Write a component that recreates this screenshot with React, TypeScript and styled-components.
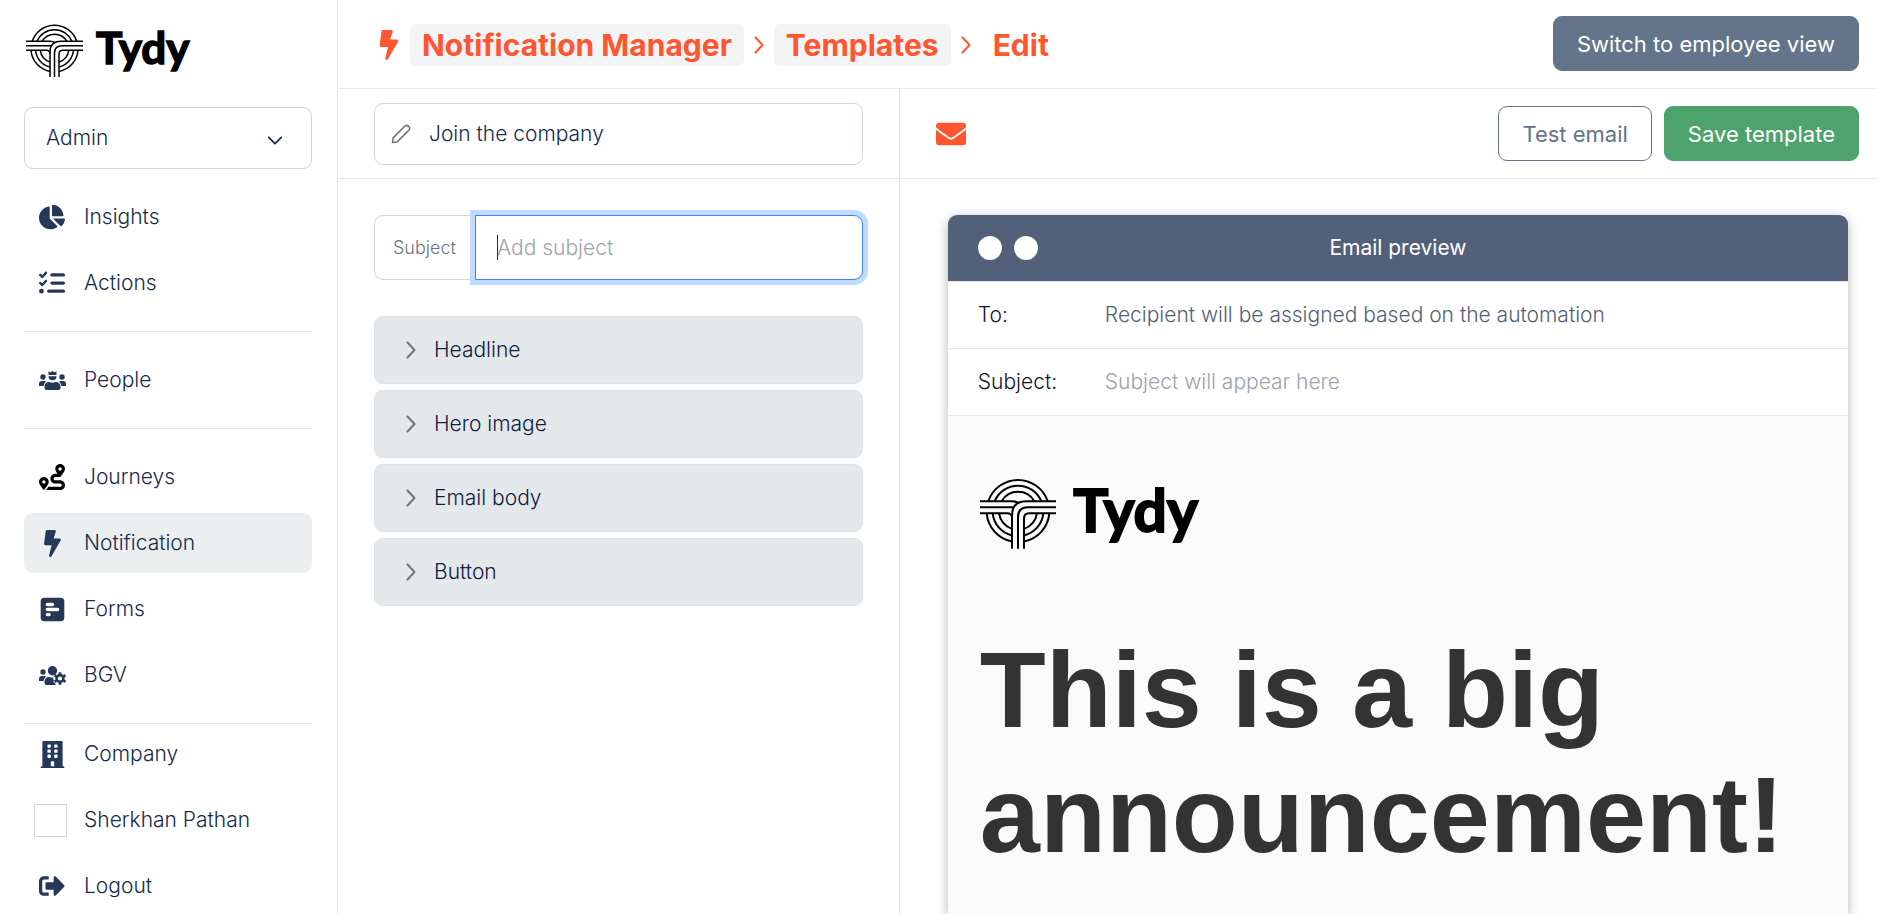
import React from "react";
import styled, { createGlobalStyle } from "styled-components";
import {
  FaBolt,
  FaBuilding,
  FaChartPie,
  FaEnvelope,
  FaRoute,
  FaSignOutAlt,
} from "react-icons/fa";
import { FaListCheck, FaSquarePollHorizontal } from "react-icons/fa6";

const color = {
  navy: "#172b4d",
  icon: "#253858",
  slate: "#64748b",
  line: "#e5e7eb",
  field: "#d1d5db",
  muted: "#9ca3af",
  orange: "#ff5630",
};

const GlobalStyle = createGlobalStyle`
  *, *::before, *::after { box-sizing: border-box; }
  body {
    margin: 0;
    background: #fff;
    color: ${color.navy};
    font-family: Inter, "Liberation Sans", sans-serif;
    font-size: 21px;
    font-weight: 300;
    line-height: 30px;
  }
  button, input, select { font: inherit; color: inherit; }
  a { color: inherit; text-decoration: none; }
  svg { display: block; flex: none; }
`;

const Page = styled.div`
  display: flex;
  height: 100vh;
  overflow: hidden;
`;

const Sidebar = styled.aside`
  flex: none;
  width: 338px;
  padding: 24px 25px 0 24px;
  border-right: 1px solid ${color.line};
`;

const BrandLink = styled.a`
  display: block;
  padding-left: 2px;
  margin-bottom: 30px;
`;

const SelectBox = styled.div`
  display: grid;
  align-items: center;
  margin-bottom: 18px;
  > * { grid-area: 1 / 1; }
  > svg { justify-self: end; margin: 4px 28px 0 0; pointer-events: none; }
`;

const RoleSelect = styled.select`
  appearance: none;
  width: 100%;
  height: 62px;
  padding: 0 60px 0 21px;
  border: 1px solid ${color.field};
  border-radius: 9px;
  background: #fff;
`;

const NavGroup = styled.ul<{ $tight?: boolean }>`
  display: flex;
  flex-direction: column;
  gap: 6px;
  list-style: none;
  margin: 0;
  padding: ${(p) => (p.$tight ? "0" : "18px 0")};
  & + & { border-top: 1px solid ${color.line}; }
  &:first-child { padding-top: 0; }
`;

const NavItem = styled.a<{ $active?: boolean }>`
  display: flex;
  align-items: center;
  gap: 14px;
  height: 60px;
  padding-left: 10px;
  border-radius: 9px;
  background: ${(p) => (p.$active ? "#ebeff0" : "transparent")};
`;

const IconSlot = styled.span<{ $color?: string }>`
  display: flex;
  justify-content: center;
  flex: none;
  width: 36px;
  color: ${(p) => p.$color ?? color.icon};
`;

const Avatar = styled.span`
  width: 33px;
  height: 33px;
  margin-right: 3px;
  border: 1px solid #d4d4d4;
`;

const Main = styled.main`
  flex: 1;
  min-width: 0;
  display: flex;
  flex-direction: column;
`;

const Header = styled.header`
  display: flex;
  align-items: center;
  justify-content: space-between;
  flex: none;
  height: 89px;
  padding: 0 18px 0 36px;
  border-bottom: 1px solid ${color.line};
`;

const Crumbs = styled.nav`
  display: flex;
  align-items: center;
  gap: 10px;
  padding-top: 2px;
  color: ${color.orange};
  font-size: 30px;
  font-weight: 700;
  line-height: 42px;
  > svg:first-child { margin-right: -4px; }
`;

const Crumb = styled.a<{ $current?: boolean }>`
  padding: 0 12px;
  border-radius: 6px;
  background: ${(p) => (p.$current ? "transparent" : "#f3f4f6")};
`;

const Button = styled.button<{ $fill?: string }>`
  height: 55px;
  padding: 0 23px;
  border: 1px solid ${(p) => p.$fill ?? color.slate};
  border-radius: 9px;
  background: ${(p) => p.$fill ?? "#fff"};
  color: ${(p) => (p.$fill ? "#fff" : color.slate)};
  font-size: 22px;
  font-weight: 400;
  white-space: nowrap;
`;

const HeaderAction = styled.div`
  margin-bottom: 1px;
`;

const Columns = styled.div`
  flex: 1;
  min-height: 0;
  display: grid;
  grid-template-columns: 23fr 40fr;
`;

const Column = styled.section`
  display: flex;
  flex-direction: column;
  min-width: 0;
  min-height: 0;
  &:first-child { border-right: 1px solid ${color.line}; }
`;

const Toolbar = styled.div`
  display: flex;
  align-items: center;
  gap: 12px;
  flex: none;
  height: 90px;
  padding: 0 18px 0 36px;
  border-bottom: 1px solid ${color.line};
  > :first-child { margin-right: auto; }
`;

const NameBar = styled(Toolbar)`
  padding-right: 36px;
`;

const NameField = styled.label`
  display: flex;
  align-items: center;
  flex: 1;
  height: 62px;
  padding: 0 17px 0 16px;
  gap: 18px;
  border: 1px solid ${color.field};
  border-radius: 9px;
`;

const BareInput = styled.input`
  flex: 1;
  min-width: 0;
  height: 42px;
  padding: 0;
  border: 0;
  outline: 0;
  background: transparent;
`;

const Form = styled.form`
  padding: 36px;
`;

const SubjectField = styled.div`
  display: flex;
  height: 65px;
  margin-bottom: 36px;
`;

const SubjectLabel = styled.label`
  display: flex;
  align-items: center;
  flex: none;
  width: 101px;
  padding-left: 18px;
  border: 1px solid ${color.field};
  border-right: 0;
  border-radius: 9px 0 0 9px;
  color: #6b7280;
  font-size: 18px;
`;

const InputWrap = styled.div`
  position: relative;
  flex: 1;
  min-width: 0;
`;

const SubjectInput = styled.input`
  width: 100%;
  height: 100%;
  padding: 0 21px;
  border: 1px solid #3b82f6;
  border-radius: 0 9px 9px 0;
  outline: 0;
  box-shadow: 0 0 0 5px #bfdbfe;
  caret-color: transparent;
  &::placeholder { color: ${color.muted}; opacity: 1; }
`;

const Caret = styled.span`
  position: absolute;
  left: 22px;
  top: 20px;
  width: 1px;
  height: 25px;
  background: ${color.navy};
`;

const Sections = styled.div`
  display: flex;
  flex-direction: column;
  gap: 6px;
`;

const SectionToggle = styled.button`
  display: flex;
  align-items: center;
  gap: 18px;
  height: 68px;
  padding: 0 31px;
  border: 1px solid #dee2e6;
  border-radius: 9px;
  background: #e4e8eb;
  color: #0f2042;
  text-align: left;
  > svg { color: #6c757d; }
`;

const PreviewArea = styled.div`
  flex: 1;
  min-height: 0;
  display: flex;
  padding: 36px 29px 0 48px;
`;

const Card = styled.article`
  flex: 1;
  min-width: 0;
  display: flex;
  flex-direction: column;
  border-radius: 9px 9px 0 0;
  box-shadow: 0 3px 12px rgba(0, 0, 0, 0.3);
`;

const CardHead = styled.div`
  display: grid;
  grid-template-columns: 1fr auto 1fr;
  align-items: center;
  flex: none;
  height: 66px;
  padding: 0 30px;
  border-radius: 9px 9px 0 0;
  background: #526179;
  color: #fff;
  font-weight: 400;
`;

const Dots = styled.div`
  display: flex;
  gap: 12px;
`;

const Dot = styled.span`
  width: 24px;
  height: 24px;
  border-radius: 50%;
  background: #fff;
`;

const MetaRow = styled.div`
  display: flex;
  align-items: center;
  flex: none;
  height: 67px;
  padding: 0 30px;
  border-top: 1px solid ${color.line};
  background: #fff;
`;

const MetaLabel = styled.span`
  flex: none;
  width: 127px;
  color: #0f172a;
`;

const MetaValue = styled.span<{ $muted?: boolean }>`
  color: ${(p) => (p.$muted ? color.muted : "#526179")};
`;

const EmailBody = styled.div`
  flex: 1;
  padding: 62px 30px 0 32px;
  border-top: 1px solid ${color.line};
  background: #fafafa;
`;

const Announcement = styled.h1`
  margin: 78px 0 0;
  color: #333;
  font-family: "Liberation Sans", Arial, sans-serif;
  font-size: 108px;
  font-weight: 700;
  line-height: 125px;
`;

const LogoSvg = styled.svg`
  overflow: visible;
`;

const CX = 114;
const CY = 98;
const RINGS = [94, 76, 57];

function ring(r: number) {
  const up = Math.round(Math.sqrt(r * r - 29 * 29));
  const side = Math.round(Math.sqrt(r * r - 7 * 7));
  const foot = CY + Math.round(Math.sqrt(r * r - 18 * 18));
  return [
    `M${CX - up} 69A${r} ${r} 0 0 1 ${CX + up} 69`,
    `M${CX - side} 105A${r} ${r} 0 0 0 96 ${foot}`,
    `M${CX + side} 105A${r} ${r} 0 0 1 132 ${foot}`,
  ].join("");
}

function TydyLogo({ width, height }: { width: number; height: number }) {
  return (
    <LogoSvg width={width} height={height} viewBox="0 0 720 212" role="img" aria-label="Tydy">
      <g fill="none" stroke="#000" strokeWidth="6">
        {RINGS.map((r) => (
          <path key={r} d={ring(r)} />
        ))}
        <path d="M228 69H139Q96 69 96 112V212" />
        <path d="M228 87H144Q114 87 114 117V212" />
        <path d="M228 105H148Q132 105 132 121V212" />
        <path d="M0 69H96Q109 69 117 75" />
        <path d="M0 87H101" />
        <path d="M0 105H82Q94 105 96 117" />
      </g>
      <text
        x="280"
        y="161"
        fontFamily="Lato, sans-serif"
        fontWeight="700"
        fontSize="176"
        stroke="#000"
        strokeWidth="6"
      >
        Tydy
      </text>
    </LogoSvg>
  );
}

function Chevron({ size, down }: { size: number; down?: boolean }) {
  return (
    <svg
      width={down ? size * 2 : size}
      height={down ? size : size * 2}
      viewBox={down ? "0 0 18 10" : "0 0 10 18"}
      fill="none"
      stroke="currentColor"
      strokeWidth="2"
      strokeLinecap="round"
      strokeLinejoin="round"
    >
      <path d={down ? "M2 1.5l7 7 7-7" : "M1.500 1.500l7 7.500-7 7.500"} />
    </svg>
  );
}

function PencilIcon() {
  return (
    <svg width="20" height="20" viewBox="0 0 20 20" fill="none" stroke="#6b7280" strokeWidth="1.500" strokeLinejoin="round">
      <path d="M1.500 18.500l.6-4.600L13.600 2.300a2.900 2.900 0 0 1 4.100 4.100L6.100 17.900z" />
    </svg>
  );
}

function CrownedGroupIcon() {
  return (
    <svg width="27" height="19" viewBox="0 0 27 19" fill="currentColor">
      <circle cx="4" cy="6" r="2.700" />
      <circle cx="23" cy="6" r="2.700" />
      <path d="M0 14.500v-1.500a3 3 0 0 1 3-3h2.500q1 0 1.500.5-2 1.500-2.400 4.500H1q-1 0-1-.5zM27 14.500v-1.500a3 3 0 0 0-3-3h-2.500q-1 0-1.500.5 2 1.500 2.400 4.500H26q1 0 1-.5z" />
      <path d="M9.500.3l2 1 2-1.300 2 1.300 2-1V4h-8zM9.500 5.300h8a4 4 0 0 1-8 0z" />
      <path d="M5.500 17v-1.500a4.500 4.500 0 0 1 4.500-4.500h.5q3 1.400 6 0h.5a4.500 4.500 0 0 1 4.500 4.500v1.500a2 2 0 0 1-2 2h-12a2 2 0 0 1-2-2z" />
    </svg>
  );
}

function GroupGearIcon() {
  return (
    <svg width="27" height="19" viewBox="0 0 27 19" fill="currentColor">
      <circle cx="4" cy="6" r="2.700" />
      <circle cx="13.500" cy="4.700" r="4.700" />
      <path d="M0 14.500v-1.500a3 3 0 0 1 3-3h2.500q1 0 1.500.5-2 1.500-2.400 4.500H1q-1 0-1-.5zM5.500 17v-1.500a4.500 4.500 0 0 1 4.500-4.500h.5q2 1 4 .6-.8 1.700.3 2.700-1 2.200 1.200 3l.8 1.700h-9.300a2 2 0 0 1-2-2z" />
      <g fill="none" stroke="currentColor">
        <circle cx="21" cy="12.500" r="3.400" strokeWidth="2.600" />
        <path
          d="M21 8.200V6.200M21 16.800v2M24.700 10.300l1.800-1M17.300 14.700l-1.800 1M24.700 14.700l1.800 1M17.300 10.300l-1.800-1"
          strokeWidth="2.800"
        />
      </g>
    </svg>
  );
}

type Item = { label: string; icon: React.ReactNode; active?: boolean; tint?: string };

const navGroups: Item[][] = [
  [
    { label: "Insights", icon: <FaChartPie size={26} /> },
    { label: "Actions", icon: <FaListCheck size={26} /> },
  ],
  [{ label: "People", icon: <CrownedGroupIcon /> }],
  [
    { label: "Journeys", icon: <FaRoute size={26} />, tint: "#000" },
    { label: "Notification", icon: <FaBolt size={27} />, active: true },
    { label: "Forms", icon: <FaSquarePollHorizontal size={27} /> },
    { label: "BGV", icon: <GroupGearIcon /> },
  ],
  [
    { label: "Company", icon: <FaBuilding size={27} /> },
    { label: "Sherkhan Pathan", icon: <Avatar /> },
    { label: "Logout", icon: <FaSignOutAlt size={26} /> },
  ],
];

const sections = ["Headline", "Hero image", "Email body", "Button"];

export default function App() {
  return (
    <>
      <GlobalStyle />
      <Page>
        <Sidebar>
          <BrandLink href="#">
            <TydyLogo width={180} height={53} />
          </BrandLink>
          <SelectBox>
            <RoleSelect aria-label="Role" defaultValue="Admin">
              <option>Admin</option>
            </RoleSelect>
            <Chevron size={9} down />
          </SelectBox>
          <nav>
            {navGroups.map((group, i) => (
              <NavGroup key={i} $tight={i === navGroups.length - 1}>
                {group.map((item) => (
                  <li key={item.label}>
                    <NavItem href="#" $active={item.active}>
                      <IconSlot $color={item.tint}>{item.icon}</IconSlot>
                      {item.label}
                    </NavItem>
                  </li>
                ))}
              </NavGroup>
            ))}
          </nav>
        </Sidebar>

        <Main>
          <Header>
            <Crumbs aria-label="Breadcrumb">
              <FaBolt size={30} />
              <Crumb href="#">Notification Manager</Crumb>
              <Chevron size={10} />
              <Crumb href="#">Templates</Crumb>
              <Chevron size={10} />
              <Crumb href="#" $current>
                Edit
              </Crumb>
            </Crumbs>
            <HeaderAction>
              <Button $fill={color.slate}>Switch to employee view</Button>
            </HeaderAction>
          </Header>

          <Columns>
            <Column>
              <NameBar>
                <NameField>
                  <PencilIcon />
                  <BareInput aria-label="Template name" defaultValue="Join the company" />
                </NameField>
              </NameBar>
              <Form>
                <SubjectField>
                  <SubjectLabel htmlFor="subject">Subject</SubjectLabel>
                  <InputWrap>
                    <SubjectInput id="subject" placeholder="Add subject" />
                    <Caret />
                  </InputWrap>
                </SubjectField>
                <Sections>
                  {sections.map((name) => (
                    <SectionToggle key={name} type="button" aria-expanded={false}>
                      <Chevron size={10} />
                      {name}
                    </SectionToggle>
                  ))}
                </Sections>
              </Form>
            </Column>

            <Column>
              <Toolbar>
                <FaEnvelope size={30} color={color.orange} />
                <Button>Test email</Button>
                <Button $fill="#4da36b">Save template</Button>
              </Toolbar>
              <PreviewArea>
                <Card>
                  <CardHead>
                    <Dots>
                      <Dot />
                      <Dot />
                    </Dots>
                    Email preview
                  </CardHead>
                  <MetaRow>
                    <MetaLabel>To:</MetaLabel>
                    <MetaValue>Recipient will be assigned based on the automation</MetaValue>
                  </MetaRow>
                  <MetaRow>
                    <MetaLabel>Subject:</MetaLabel>
                    <MetaValue $muted>Subject will appear here</MetaValue>
                  </MetaRow>
                  <EmailBody>
                    <TydyLogo width={240} height={71} />
                    <Announcement>This is a big announcement!</Announcement>
                  </EmailBody>
                </Card>
              </PreviewArea>
            </Column>
          </Columns>
        </Main>
      </Page>
    </>
  );
}
